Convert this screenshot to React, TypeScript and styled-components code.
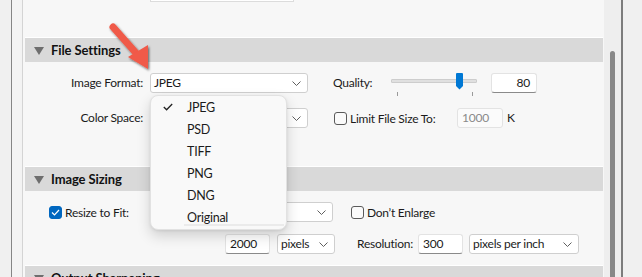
import React from "react";
import styled, { createGlobalStyle } from "styled-components";

const Global = createGlobalStyle`
  html, body { margin: 0; padding: 0; background: #f0f0f0; }
  body { font-family: Lato, "Noto Sans", sans-serif; font-size: 12px; letter-spacing: -0.25px; color: #1b1b1b; }
  * { box-sizing: border-box; }
`;

const Window = styled.div`
  display: flex;
  width: 642px;
  height: 277px;
  overflow: hidden;
  background: #f0f0f0;
`;

const Gutter = styled.div<{ $w: number; $bg: string }>`
  width: ${(p) => p.$w}px;
  flex: none;
  background: ${(p) => p.$bg};
`;

const Rule = styled.div<{ $c: string; $w?: number }>`
  width: ${(p) => p.$w ?? 1}px;
  flex: none;
  background: ${(p) => p.$c};
`;

const Panel = styled.div`
  position: relative;
  width: 581px;
  flex: none;
  background: #f7f7f7;
  display: flex;
  flex-direction: column;
`;

const Remnant = styled.div`
  height: 37px;
  flex: none;
`;

const RemnantField = styled.div`
  margin-left: 127px;
  width: 144px;
  height: 2px;
  background: #fff;
  border: 1px solid #dcdcdc;
  border-top: none;
`;

const Header = styled.div`
  flex: none;
  height: 25px;
  margin: 0 1px 0 2px;
  border-top: 1px solid #ffffff;
  background: #d9d9d9;
  display: flex;
  align-items: center;
  padding-left: 9px;
  gap: 7px;
  font-weight: 700;
  font-size: 13px;
  letter-spacing: -0.1px;
  color: #111;
`;

const Tri = styled.span`
  width: 0;
  height: 0;
  border-left: 5px solid transparent;
  border-right: 5px solid transparent;
  border-top: 8px solid #6e6e6e;
  margin-top: 1px;
`;

const Body = styled.div<{ $h: number; $gap: number }>`
  flex: none;
  height: ${(p) => p.$h}px;
  padding-top: 11px;
  display: flex;
  flex-direction: column;
  gap: ${(p) => p.$gap}px;
`;

const Row = styled.div<{ $pl?: number }>`
  display: flex;
  align-items: center;
  height: 20px;
  padding-left: ${(p) => p.$pl ?? 0}px;
`;

const Label = styled.div<{ $w?: number; $right?: boolean; $ml?: number }>`
  flex: none;
  ${(p) => (p.$w ? `width: ${p.$w}px;` : "")}
  text-align: ${(p) => (p.$right ? "right" : "left")};
  margin-left: ${(p) => p.$ml ?? 0}px;
  white-space: nowrap;
  line-height: 16px;
`;

const SelectBox = styled.div<{ $w: number; $ml?: number }>`
  flex: none;
  width: ${(p) => p.$w}px;
  height: 20px;
  margin-left: ${(p) => p.$ml ?? 0}px;
  background: #ffffff;
  border: 1px solid #cfcfcf;
  border-radius: 3px;
  display: flex;
  align-items: center;
  justify-content: space-between;
  padding: 0 6px 0 3px;
  line-height: 16px;
  white-space: nowrap;
`;

const Field = styled.div<{ $w: number; $ml?: number; $right?: boolean; $dim?: boolean }>`
  flex: none;
  width: ${(p) => p.$w}px;
  height: 20px;
  margin-left: ${(p) => p.$ml ?? 0}px;
  background: ${(p) => (p.$dim ? "#fbfbfb" : "#ffffff")};
  border: 1px solid #e3e3e3;
  border-bottom-color: ${(p) => (p.$dim ? "#e3e3e3" : "#8a8a8a")};
  border-radius: 3px;
  padding: 0 ${(p) => (p.$right ? 6 : 4)}px;
  text-align: ${(p) => (p.$right ? "right" : "left")};
  color: ${(p) => (p.$dim ? "#8a8a8a" : "#1b1b1b")};
  line-height: 18px;
`;

const CheckWrap = styled.label<{ $w?: number; $ml?: number }>`
  flex: none;
  display: flex;
  align-items: center;
  gap: 3px;
  ${(p) => (p.$w ? `width: ${p.$w}px;` : "")}
  margin-left: ${(p) => p.$ml ?? 0}px;
  white-space: nowrap;
`;

const Box = styled.span<{ $on?: boolean }>`
  width: 13px;
  height: 13px;
  border-radius: 3px;
  border: 1px solid ${(p) => (p.$on ? "#0067c0" : "#5a5a5a")};
  background: ${(p) => (p.$on ? "#0067c0" : "#fafafa")};
  display: flex;
  align-items: center;
  justify-content: center;
`;

const Slider = styled.div`
  position: relative;
  flex: none;
  width: 86px;
  height: 20px;
`;

const Track = styled.div`
  position: absolute;
  left: 0;
  right: 0;
  top: 6px;
  height: 4px;
  background: #e0e0e0;
  border: 1px solid #cdcdcd;
  border-radius: 1px;
`;

const Thumb = styled.svg`
  position: absolute;
  left: 65px;
  top: 0;
`;

const Tick = styled.div<{ $x: number }>`
  position: absolute;
  top: 19px;
  left: ${(p) => p.$x}px;
  width: 1px;
  height: 4px;
  background: #9a9a9a;
`;

const Scroll = styled.div`
  width: 17px;
  flex: none;
  background: #eeeeee;
  padding: 51px 0 0 6px;
`;

const ScrollThumb = styled.div`
  width: 5px;
  height: 240px;
  background: #888888;
  border-radius: 3px 3px 0 0;
`;

const Menu = styled.div`
  position: absolute;
  left: 127px;
  top: 95px;
  width: 137px;
  height: 135px;
  background: #f9f9f9;
  border: 1px solid #e2e2e2;
  border-radius: 8px;
  box-shadow: 0 6px 14px rgba(0, 0, 0, 0.16), 0 1px 3px rgba(0, 0, 0, 0.08);
  display: flex;
  flex-direction: column;
  font-size: 12.5px;
`;

const MenuItem = styled.div`
  height: 22px;
  display: flex;
  align-items: center;
  position: relative;
  padding-left: 36px;
  color: #1b1b1b;
`;

const Tickmark = styled.svg`
  position: absolute;
  left: 12px;
  top: 7px;
`;

const MenuBar = styled.div`
  position: absolute;
  left: 33px;
  bottom: 3px;
  width: 100px;
  height: 2px;
  background: #ebebeb;
`;

const Arrow = styled.svg`
  position: absolute;
  left: 82px;
  top: 15px;
  overflow: visible;
`;

const Chevron = () => (
  <svg width="9" height="5" viewBox="0 0 9 5">
    <polyline points="0.5,0.5 4.5,4.5 8.5,0.5" fill="none" stroke="#5f5f5f" strokeWidth="1" />
  </svg>
);

const Select = ({ w, ml, text }: { w: number; ml?: number; text?: string }) => (
  <SelectBox $w={w} $ml={ml}>
    <span>{text ?? ""}</span>
    <Chevron />
  </SelectBox>
);

const Check = ({ on }: { on?: boolean }) => (
  <Box $on={on}>
    {on && (
      <svg width="9" height="7" viewBox="0 0 9 7">
        <polyline points="1,3.5 3.5,6 8,1" fill="none" stroke="#fff" strokeWidth="1.2" />
      </svg>
    )}
  </Box>
);

const formats = ["JPEG", "PSD", "TIFF", "PNG", "DNG", "Original"];

export default function App() {
  return (
    <>
      <Global />
      <Window>
        <Gutter $w={11} $bg="#f0f0f0" />
        <Rule $c="#858585" />
        <Gutter $w={10} $bg="#f3f3f3" />
        <Rule $c="#d4d4d4" />
        <Panel>
          <Remnant>
            <RemnantField />
          </Remnant>

          <Header>
            <Tri />
            File Settings
          </Header>
          <Body $h={104} $gap={15}>
            <Row>
              <Label $w={120} $right>Image Format:</Label>
              <Select w={158} ml={7} text="JPEG" />
              <Label $w={58} $ml={25}>Quality:</Label>
              <Slider>
                <Track />
                <Thumb width="7" height="17" viewBox="0 0 7 17">
                  <path d="M1 0 H6 Q7 0 7 1 V13 L3.5 16.5 L0 13 V1 Q0 0 1 0 Z" fill="#0078d4" />
                </Thumb>
                <Tick $x={6} />
                <Tick $x={81} />
              </Slider>
              <Field $w={46} $ml={14} $right>80</Field>
            </Row>
            <Row>
              <Label $w={120} $right>Color Space:</Label>
              <Select w={158} ml={7} />
              <CheckWrap $w={123} $ml={26}>
                <Check />
                Limit File Size To:
              </CheckWrap>
              <Field $w={46} $dim>1000</Field>
              <Label $ml={4}>K</Label>
            </Row>
          </Body>

          <Header>
            <Tri />
            Image Sizing
          </Header>
          <Body $h={74} $gap={12}>
            <Row $pl={26}>
              <CheckWrap $w={176}>
                <Check on />
                Resize to Fit:
              </CheckWrap>
              <Select w={108} />
              <CheckWrap $ml={18}>
                <Check />
                Don’t Enlarge
              </CheckWrap>
            </Row>
            <Row $pl={202}>
              <Field $w={45}>2000</Field>
              <Select w={58} ml={7} text="pixels" />
              <Label $w={61} $ml={22}>Resolution:</Label>
              <Field $w={45}>300</Field>
              <Select w={110} ml={6} text="pixels per inch" />
            </Row>
          </Body>

          <Header>
            <Tri />
            Output Sharpening
          </Header>

          <Menu>
            {formats.map((f, i) => (
              <MenuItem key={f}>
                {i === 0 && (
                  <Tickmark width="10" height="8" viewBox="0 0 10 8">
                    <polyline points="0.8,4 3.6,6.8 9.2,1" fill="none" stroke="#222" strokeWidth="1.3" />
                  </Tickmark>
                )}
                {f}
              </MenuItem>
            ))}
            <MenuBar />
          </Menu>

          <Arrow width="60" height="60" viewBox="105 15 60 60">
            <defs>
              <filter id="sh" x="-30%" y="-30%" width="160%" height="160%">
                <feDropShadow dx="1.2" dy="1.5" stdDeviation="1.2" floodColor="#000" floodOpacity="0.55" />
              </filter>
            </defs>
            <g filter="url(#sh)" fill="#f05a48">
              <line x1="113" y1="27" x2="136" y2="53" stroke="#f05a48" strokeWidth="7" strokeLinecap="round" />
              <polygon points="128,57 148,45 148,69" />
            </g>
          </Arrow>
        </Panel>
        <Scroll>
          <ScrollThumb />
        </Scroll>
        <Rule $c="#7d7d7d" $w={2} />
        <Gutter $w={20} $bg="#f0f0f0" />
      </Window>
    </>
  );
}
